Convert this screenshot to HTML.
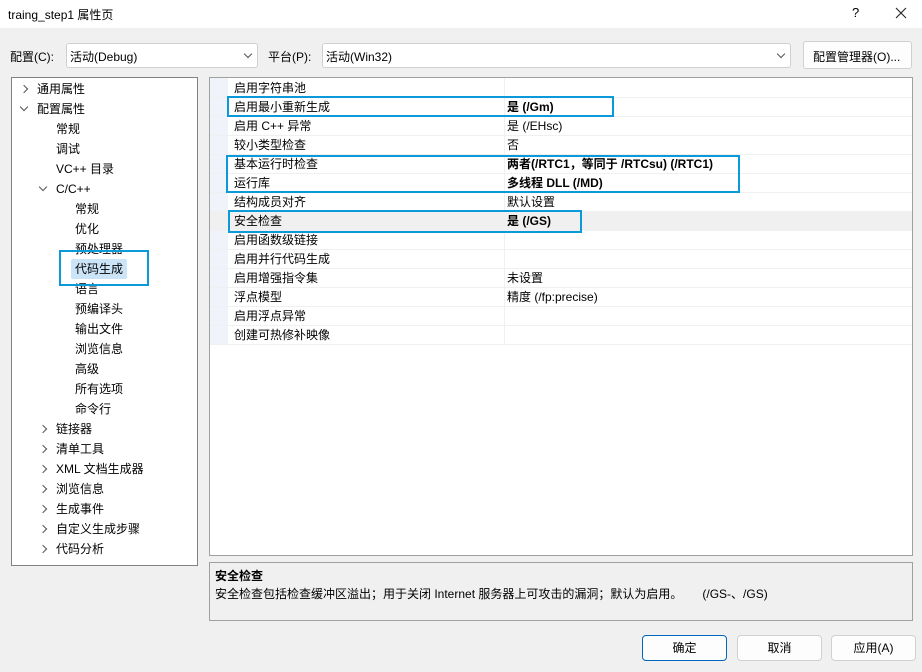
<!DOCTYPE html>
<html><head><meta charset="utf-8"><style>
*{box-sizing:border-box;margin:0;padding:0}
body{width:922px;height:672px;background:#f0f0f0;font-family:"Liberation Sans","Noto Sans CJK SC",sans-serif;font-size:12px;color:#000;position:relative;overflow:hidden}
.abs{position:absolute}
.title{left:0;top:0;width:922px;height:28px;background:#fff}
.combo{height:25px;background:#fff;border:1px solid #d0d0d0;border-radius:3px;padding:4px 0 0 3px;font-size:12px}
.tree{left:11px;top:77px;width:187px;height:489px;background:#fff;border:1px solid #828282}
.ti{position:absolute;height:20px;line-height:20px;white-space:nowrap}
.grid{left:209px;top:77px;width:704px;height:479px;background:#fff;border:1px solid #a0a0a0}
.row{position:absolute;left:0;width:702px;height:19px;line-height:19px;border-bottom:1px solid #f0f0f0}
.row .n{position:absolute;left:24px}
.row .v{position:absolute;left:297px}
.b{font-weight:bold}
.hl{position:absolute;border:2px solid #0a9ad9}
.btn{top:635px;height:26px;width:85px;background:#fdfdfd;border:1px solid #d0d0d0;border-radius:4px;text-align:center;line-height:24px}
.chev{position:absolute;width:6px;height:6px;border-right:1px solid #555;border-bottom:1px solid #555}
</style></head><body>
<div class="abs title"><span class="abs" style="left:8px;top:6px;font-size:12px">traing_step1 属性页</span>
<span class="abs" style="left:852px;top:5px;font-size:13px">?</span>
<svg class="abs" style="left:895px;top:7px" width="12" height="12" viewBox="0 0 12 12"><path d="M1 1L11 11M11 1L1 11" stroke="#222" stroke-width="1.1" fill="none"/></svg></div>

<span class="abs" style="left:10px;top:48px">配置(C):</span>
<div class="abs combo" style="left:66px;top:43px;width:192px">活动(Debug)</div>
<div class="chev" style="left:245px;top:51px;transform:rotate(45deg)"></div>
<span class="abs" style="left:268px;top:48px">平台(P):</span>
<div class="abs combo" style="left:322px;top:43px;width:469px">活动(Win32)</div>
<div class="chev" style="left:778px;top:51px;transform:rotate(45deg)"></div>
<div class="abs combo" style="left:803px;top:41px;width:109px;height:28px;background:#fdfdfd;padding:6px 0 0 9px">配置管理器(O)...</div>

<div class="abs tree">
<div class="chev" style="left:9px;top:8px;transform:rotate(-45deg)"></div>
<div class="ti" style="left:25px;top:1px">通用属性</div>
<div class="chev" style="left:9px;top:26px;transform:rotate(45deg)"></div>
<div class="ti" style="left:25px;top:21px">配置属性</div>
<div class="ti" style="left:44px;top:41px">常规</div>
<div class="ti" style="left:44px;top:61px">调试</div>
<div class="ti" style="left:44px;top:81px">VC++ 目录</div>
<div class="chev" style="left:28px;top:106px;transform:rotate(45deg)"></div>
<div class="ti" style="left:44px;top:101px">C/C++</div>
<div class="ti" style="left:63px;top:121px">常规</div>
<div class="ti" style="left:63px;top:141px">优化</div>
<div class="ti" style="left:63px;top:161px">预处理器</div>
<div class="ti" style="left:59px;top:181px;background:#cce4f7;padding:0 4px;border-radius:2px">代码生成</div>
<div class="ti" style="left:63px;top:201px">语言</div>
<div class="ti" style="left:63px;top:221px">预编译头</div>
<div class="ti" style="left:63px;top:241px">输出文件</div>
<div class="ti" style="left:63px;top:261px">浏览信息</div>
<div class="ti" style="left:63px;top:281px">高级</div>
<div class="ti" style="left:63px;top:301px">所有选项</div>
<div class="ti" style="left:63px;top:321px">命令行</div>
<div class="chev" style="left:28px;top:348px;transform:rotate(-45deg)"></div><div class="ti" style="left:44px;top:341px">链接器</div>
<div class="chev" style="left:28px;top:368px;transform:rotate(-45deg)"></div><div class="ti" style="left:44px;top:361px">清单工具</div>
<div class="chev" style="left:28px;top:388px;transform:rotate(-45deg)"></div><div class="ti" style="left:44px;top:381px">XML 文档生成器</div>
<div class="chev" style="left:28px;top:408px;transform:rotate(-45deg)"></div><div class="ti" style="left:44px;top:401px">浏览信息</div>
<div class="chev" style="left:28px;top:428px;transform:rotate(-45deg)"></div><div class="ti" style="left:44px;top:421px">生成事件</div>
<div class="chev" style="left:28px;top:448px;transform:rotate(-45deg)"></div><div class="ti" style="left:44px;top:441px">自定义生成步骤</div>
<div class="chev" style="left:28px;top:468px;transform:rotate(-45deg)"></div><div class="ti" style="left:44px;top:461px">代码分析</div>
</div>
<div class="hl" style="left:59px;top:250px;width:90px;height:36px"></div>

<div class="abs grid">
<div class="abs" style="left:0;top:0;width:18px;height:267px;background:#f0f3f9"></div>
<div class="abs" style="left:294px;top:0;width:1px;height:267px;background:#f0f0f0"></div>
<div class="row" style="top:1px"><span class="n">启用字符串池</span></div>
<div class="row" style="top:20px"><span class="n">启用最小重新生成</span><span class="v b">是 (/Gm)</span></div>
<div class="row" style="top:39px"><span class="n">启用 C++ 异常</span><span class="v">是 (/EHsc)</span></div>
<div class="row" style="top:58px"><span class="n">较小类型检查</span><span class="v">否</span></div>
<div class="row" style="top:77px"><span class="n">基本运行时检查</span><span class="v b">两者(/RTC1，等同于 /RTCsu) (/RTC1)</span></div>
<div class="row" style="top:96px"><span class="n">运行库</span><span class="v b">多线程 DLL (/MD)</span></div>
<div class="row" style="top:115px"><span class="n">结构成员对齐</span><span class="v">默认设置</span></div>
<div class="row" style="top:134px;background:#f0f0f0"><span class="n">安全检查</span><span class="v b">是 (/GS)</span></div>
<div class="row" style="top:153px"><span class="n">启用函数级链接</span></div>
<div class="row" style="top:172px"><span class="n">启用并行代码生成</span></div>
<div class="row" style="top:191px"><span class="n">启用增强指令集</span><span class="v">未设置</span></div>
<div class="row" style="top:210px"><span class="n">浮点模型</span><span class="v">精度 (/fp:precise)</span></div>
<div class="row" style="top:229px"><span class="n">启用浮点异常</span></div>
<div class="row" style="top:248px"><span class="n">创建可热修补映像</span></div>
</div>
<div class="hl" style="left:227px;top:96px;width:387px;height:21px"></div>
<div class="hl" style="left:226px;top:155px;width:514px;height:38px"></div>
<div class="hl" style="left:228px;top:210px;width:354px;height:23px"></div>

<div class="abs" style="left:209px;top:562px;width:704px;height:59px;border:1px solid #a0a0a0;background:#f0f0f0">
<div class="abs b" style="left:5px;top:4px">安全检查</div>
<div class="abs" style="left:5px;top:22px;white-space:nowrap">安全检查包括检查缓冲区溢出；用于关闭 Internet 服务器上可攻击的漏洞；默认为启用。&nbsp;&nbsp;&nbsp;&nbsp;&nbsp;&nbsp;(/GS-、/GS)</div>
</div>

<div class="abs btn" style="left:642px;border-color:#0067c0">确定</div>
<div class="abs btn" style="left:737px">取消</div>
<div class="abs btn" style="left:831px">应用(A)</div>
</body></html>
